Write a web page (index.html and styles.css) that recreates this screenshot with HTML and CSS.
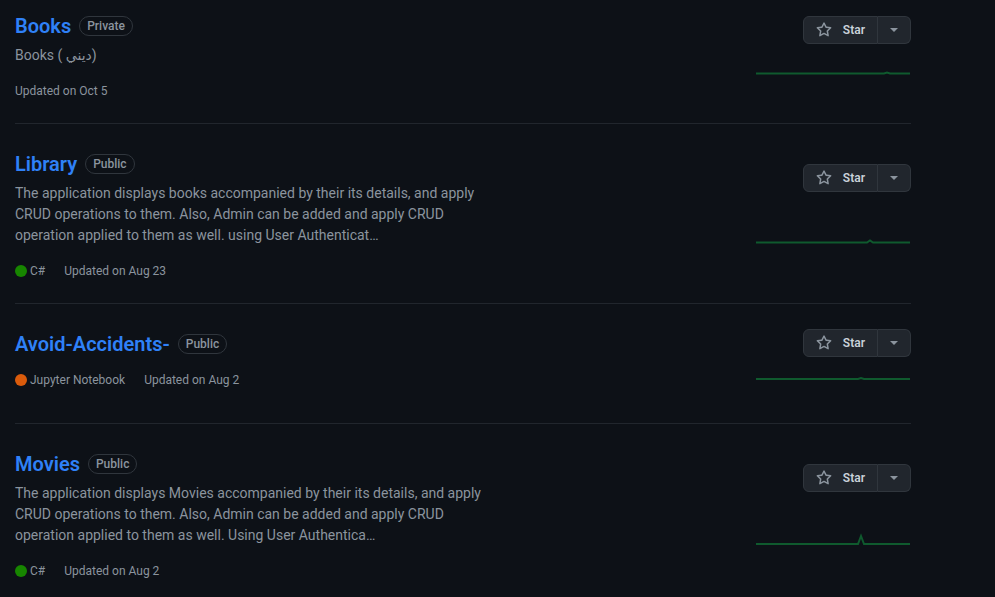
FILE: index.html
```html
<!DOCTYPE html>
<html lang="en">
<head>
<meta charset="utf-8">
<title>Repositories</title>
<link rel="stylesheet" href="styles.css">
</head>
<body>
<ul class="repo-list">
  <li class="repo">
    <div class="repo-main">
      <div class="repo-head">
        <h3 class="repo-title"><a href="#">Books</a></h3>
        <span class="label">Private</span>
      </div>
      <p class="repo-desc">Books ( ديني)</p>
      <div class="repo-meta">
        <span class="updated">Updated on Oct 5</span>
      </div>
    </div>
    <div class="repo-side">
      <div class="star-group">
        <button class="btn star-btn"><svg class="star-icon" viewBox="0 0 16 16" width="16" height="16"><path d="M8 .25a.75.75 0 0 1 .673.418l1.882 3.815 4.21.612a.75.75 0 0 1 .416 1.279l-3.046 2.97.719 4.192a.751.751 0 0 1-1.088.791L8 12.347l-3.766 1.98a.75.75 0 0 1-1.088-.79l.72-4.194L.818 6.374a.75.75 0 0 1 .416-1.28l4.21-.611L7.327.668A.75.75 0 0 1 8 .25Zm0 2.445L6.615 5.5a.75.75 0 0 1-.564.41l-3.097.45 2.24 2.184a.75.75 0 0 1 .216.664l-.528 3.084 2.769-1.456a.75.75 0 0 1 .698 0l2.770 1.456-.53-3.084a.75.75 0 0 1 .216-.664l2.24-2.183-3.096-.45a.75.75 0 0 1-.564-.41L8 2.694Z"/></svg> Star</button><button class="btn caret-btn"><span class="caret"></span></button>
      </div>
      <div class="spark">
        <svg viewBox="0 0 155 43" width="155" height="43"><polyline points="0,20.5 128,20.5 131,19.5 134,20.5 154,20.5"/></svg>
      </div>
    </div>
  </li>
  <li class="repo">
    <div class="repo-main">
      <div class="repo-head">
        <h3 class="repo-title"><a href="#">Library</a></h3>
        <span class="label">Public</span>
      </div>
      <p class="repo-desc">The application displays books accompanied by their its details, and apply CRUD operations to them. Also, Admin can be added and apply CRUD operation applied to them as well. using User Authenticat…</p>
      <div class="repo-meta">
        <span class="lang"><span class="lang-dot csharp"></span>C#</span>
        <span class="updated">Updated on Aug 23</span>
      </div>
    </div>
    <div class="repo-side">
      <div class="star-group">
        <button class="btn star-btn"><svg class="star-icon" viewBox="0 0 16 16" width="16" height="16"><path d="M8 .25a.75.75 0 0 1 .673.418l1.882 3.815 4.21.612a.75.75 0 0 1 .416 1.279l-3.046 2.97.719 4.192a.751.751 0 0 1-1.088.791L8 12.347l-3.766 1.98a.75.75 0 0 1-1.088-.79l.72-4.194L.818 6.374a.75.75 0 0 1 .416-1.28l4.21-.611L7.327.668A.75.75 0 0 1 8 .25Zm0 2.445L6.615 5.5a.75.75 0 0 1-.564.41l-3.097.45 2.24 2.184a.75.75 0 0 1 .216.664l-.528 3.084 2.769-1.456a.75.75 0 0 1 .698 0l2.770 1.456-.53-3.084a.75.75 0 0 1 .216-.664l2.24-2.183-3.096-.45a.75.75 0 0 1-.564-.41L8 2.694Z"/></svg> Star</button><button class="btn caret-btn"><span class="caret"></span></button>
      </div>
      <div class="spark">
        <svg viewBox="0 0 155 43" width="155" height="43"><polyline points="0,20.5 111,20.5 114,18.5 117,20.5 154,20.5"/></svg>
      </div>
    </div>
  </li>
  <li class="repo">
    <div class="repo-main">
      <div class="repo-head">
        <h3 class="repo-title"><a href="#">Avoid-Accidents-</a></h3>
        <span class="label">Public</span>
      </div>
      <div class="repo-meta">
        <span class="lang"><span class="lang-dot jupyter"></span>Jupyter Notebook</span>
        <span class="updated">Updated on Aug 2</span>
      </div>
    </div>
    <div class="repo-side">
      <div class="star-group">
        <button class="btn star-btn"><svg class="star-icon" viewBox="0 0 16 16" width="16" height="16"><path d="M8 .25a.75.75 0 0 1 .673.418l1.882 3.815 4.21.612a.75.75 0 0 1 .416 1.279l-3.046 2.97.719 4.192a.751.751 0 0 1-1.088.791L8 12.347l-3.766 1.98a.75.75 0 0 1-1.088-.79l.72-4.194L.818 6.374a.75.75 0 0 1 .416-1.28l4.21-.611L7.327.668A.75.75 0 0 1 8 .25Zm0 2.445L6.615 5.5a.75.75 0 0 1-.564.41l-3.097.45 2.24 2.184a.75.75 0 0 1 .216.664l-.528 3.084 2.769-1.456a.75.75 0 0 1 .698 0l2.770 1.456-.53-3.084a.75.75 0 0 1 .216-.664l2.24-2.183-3.096-.45a.75.75 0 0 1-.564-.41L8 2.694Z"/></svg> Star</button><button class="btn caret-btn"><span class="caret"></span></button>
      </div>
      <div class="spark">
        <svg viewBox="0 0 155 43" width="155" height="43"><polyline points="0,22 102,22 105,21 108,22 154,22"/></svg>
      </div>
    </div>
  </li>
  <li class="repo">
    <div class="repo-main">
      <div class="repo-head">
        <h3 class="repo-title"><a href="#">Movies</a></h3>
        <span class="label">Public</span>
      </div>
      <p class="repo-desc">The application displays Movies accompanied by their its details, and apply CRUD operations to them. Also, Admin can be added and apply CRUD operation applied to them as well. Using User Authentica…</p>
      <div class="repo-meta">
        <span class="lang"><span class="lang-dot csharp"></span>C#</span>
        <span class="updated">Updated on Aug 2</span>
      </div>
    </div>
    <div class="repo-side">
      <div class="star-group">
        <button class="btn star-btn"><svg class="star-icon" viewBox="0 0 16 16" width="16" height="16"><path d="M8 .25a.75.75 0 0 1 .673.418l1.882 3.815 4.21.612a.75.75 0 0 1 .416 1.279l-3.046 2.97.719 4.192a.751.751 0 0 1-1.088.791L8 12.347l-3.766 1.98a.75.75 0 0 1-1.088-.79l.72-4.194L.818 6.374a.75.75 0 0 1 .416-1.28l4.21-.611L7.327.668A.75.75 0 0 1 8 .25Zm0 2.445L6.615 5.5a.75.75 0 0 1-.564.41l-3.097.45 2.24 2.184a.75.75 0 0 1 .216.664l-.528 3.084 2.769-1.456a.75.75 0 0 1 .698 0l2.770 1.456-.53-3.084a.75.75 0 0 1 .216-.664l2.24-2.183-3.096-.45a.75.75 0 0 1-.564-.41L8 2.694Z"/></svg> Star</button><button class="btn caret-btn"><span class="caret"></span></button>
      </div>
      <div class="spark">
        <svg viewBox="0 0 155 43" width="155" height="43"><polyline points="0,22 102,22 105,14 108,22 154,22"/></svg>
      </div>
    </div>
  </li>
</ul>
</body>
</html>
```
FILE: styles.css
```css
html, body {
  margin: 0;
  padding: 0;
  background: #0d1117;
}

body {
  font-family: Roboto, "Noto Sans", "DejaVu Sans", sans-serif;
  color: #8b949e;
  overflow: hidden;
}

.repo-list {
  list-style: none;
  margin: 0 0 0 15px;
  padding: 0;
  width: 896px;
}

.repo {
  display: flex;
  padding: 25px 0 23px;
  border-bottom: 1px solid #21262d;
}

.repo:first-child {
  padding-top: 11px;
}

.repo-main {
  flex: 1;
  min-width: 0;
  display: flex;
  flex-direction: column;
  align-items: flex-start;
}

.repo-head {
  display: flex;
  align-items: center;
  gap: 8px;
  margin-bottom: 4px;
}

.repo-title {
  margin: 0;
  font-size: 20px;
  font-weight: 600;
  line-height: 30px;
}

.repo-title a {
  color: #2f81f7;
  text-decoration: none;
}

.label {
  display: inline-block;
  border: 1px solid #30363d;
  border-radius: 2em;
  padding: 0 7px;
  font-size: 12px;
  font-weight: 500;
  line-height: 18px;
  color: #8b949e;
}

.repo-desc {
  margin: 0 0 8px;
  width: 480px;
  font-size: 14px;
  line-height: 21px;
  color: #8b949e;
}

.repo-meta {
  margin-top: 8px;
  font-size: 12px;
  line-height: 18px;
  color: #8b949e;
  display: flex;
  align-items: center;
}

.lang {
  display: inline-flex;
  align-items: center;
  gap: 3px;
  margin-right: 19px;
}

.lang-dot {
  width: 12px;
  height: 12px;
  border-radius: 50%;
  display: inline-block;
}

.lang-dot.csharp { background: #178600; }
.lang-dot.jupyter { background: #da5b0b; }

.repo-side {
  width: 155px;
  margin-left: 16px;
  display: flex;
  flex-direction: column;
  justify-content: space-around;
  align-items: flex-end;
}

.star-group {
  display: flex;
}

.btn {
  font-family: inherit;
  font-size: 12px;
  font-weight: 600;
  line-height: 20px;
  color: #c9d1d9;
  background: #21262d;
  border: 1px solid #30363d;
  padding: 3px 12px;
  margin: 0;
  display: inline-flex;
  align-items: center;
  cursor: pointer;
}

.star-btn {
  border-radius: 6px 0 0 6px;
  white-space: pre;
}

.star-icon {
  fill: #8b949e;
  margin-right: 8px;
}

.caret-btn {
  border-left: 0;
  border-radius: 0 6px 6px 0;
  height: 28px;
  padding: 0 12px;
}

.caret {
  width: 0;
  height: 0;
  border-top: 4px solid #8b949e;
  border-left: 4px solid transparent;
  border-right: 4px solid transparent;
}

.spark svg {
  display: block;
}

.spark polyline {
  fill: none;
  stroke: #0f5a2e;
  stroke-width: 2;
}
```
